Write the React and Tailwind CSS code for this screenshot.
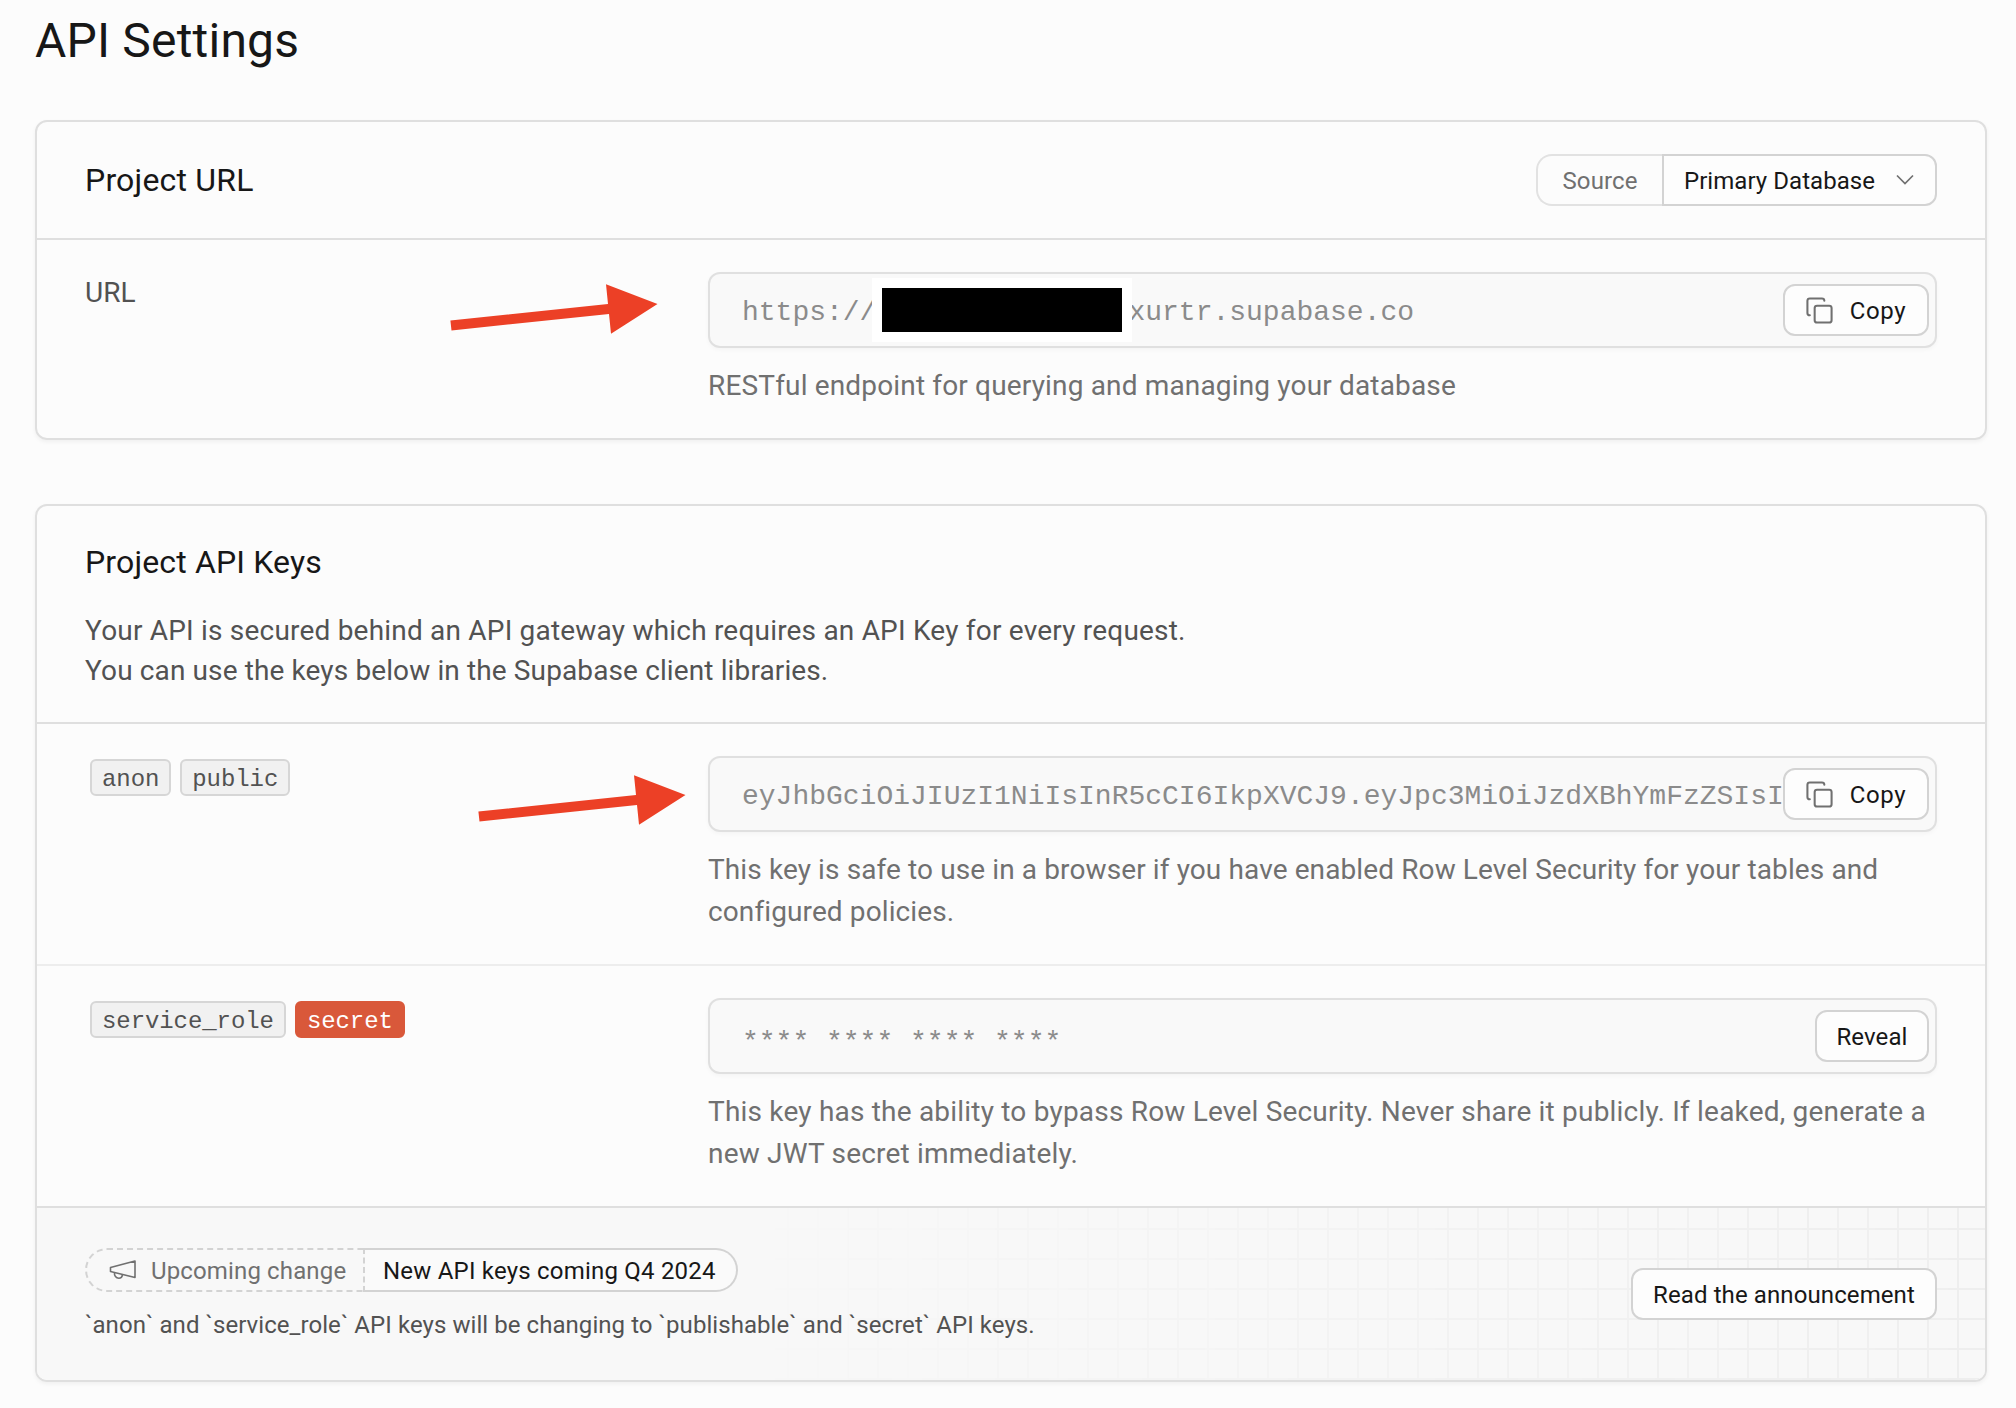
import React from "react";
import { Copy } from "lucide-react";

function Button({ children, className = "" }) {
  return (
    <button
      type="button"
      className={`flex h-[52px] shrink-0 items-center justify-center rounded-xl border-2 border-[#d3d3d3] bg-[#fdfdfd] pt-[2px] text-2xl tracking-[0.1px] text-[#171717] ${className}`}
    >
      {children}
    </button>
  );
}

function CopyButton() {
  return (
    <Button className="w-[146px] gap-[16px]">
      <Copy size={29} strokeWidth={1.7} className="-mt-[2px] -ml-px text-[#707070]" />
      <span className="tracking-[0.6px]">Copy</span>
    </Button>
  );
}

function Field({ value, action }) {
  return (
    <div className="flex h-[76px] items-center rounded-xl border-2 border-[#e0e0e0] bg-[#f9f9f9] pr-[6px] pl-8 shadow-[0_2px_4px_rgba(0,0,0,0.03)]">
      <div className="min-w-0 flex-1 pt-[5px] font-['Liberation_Mono',monospace] text-[28px] leading-10 whitespace-pre text-[#8b8b8b]">
        {value}
      </div>
      {action}
    </div>
  );
}

function Row({ label, children, help }) {
  return (
    <div className="flex justify-between pt-8 pr-12 pb-[31px] pl-12">
      <div>{label}</div>
      <div className="w-[1229px]">
        {children}
        <p className="mt-[17px] text-[28px] leading-[42px] text-[#707070]">{help}</p>
      </div>
    </div>
  );
}

function Tag({ children, danger }) {
  return (
    <span
      className={`flex h-[37px] items-center rounded-md border-2 px-[10px] pt-[4px] font-['Liberation_Mono',monospace] text-2xl leading-none tracking-[-0.08px] ${
        danger ? "border-[#d9583a] bg-[#d9583a] text-white" : "border-[#d6d6d6] bg-[#f1f1f1] text-[#525252]"
      }`}
    >
      {children}
    </span>
  );
}

function Tags({ children }) {
  return <div className="mt-[3px] ml-[5px] flex gap-[9px]">{children}</div>;
}

function Arrow({ className }) {
  return (
    <svg className={`pointer-events-none absolute ${className}`} width="208" height="50" viewBox="0 0 208 50">
      <path d="M.4 36.5 158 20 156 .3l51.5 19.7L161 49.7 159 30 1.5 46.5z" fill="#ec4026" />
    </svg>
  );
}

const card = "rounded-xl border-2 border-[#dfdfdf] shadow-[0_2px_4px_rgba(0,0,0,0.05)]";

export default function App() {
  return (
    <main className="relative h-[1408px] w-[2016px] overflow-hidden bg-[#fcfcfc] pt-[13px] pr-[29px] pl-[35px] font-[Roboto,sans-serif]">
      <h1 className="h-14 text-5xl leading-[56px] tracking-[0.2px] text-[#171717]">API Settings</h1>

      <section className={`mt-[51px] ${card}`}>
        <header className="flex h-[118px] items-center justify-between border-b-2 border-[#dfdfdf] pr-12 pl-12">
          <h2 className="text-[32px] tracking-[0.2px] text-[#171717]">Project URL</h2>
          <div className="flex h-[52px] text-2xl">
            <span className="flex w-[126px] items-center justify-center rounded-l-2xl border-2 border-r-0 border-[#e2e2e2] pt-[2px] tracking-[0.1px] text-[#707070]">
              Source
            </span>
            <button
              type="button"
              className="flex w-[275px] items-center justify-between rounded-r-xl border-2 border-[#d3d3d3] bg-[#fdfdfd] pt-[2px] pr-[21px] pl-5 tracking-[0.05px] text-[#171717]"
            >
              Primary Database
              <svg className="-mt-[2px]" width="18" height="12" viewBox="0 0 18 12" fill="none" stroke="#707070" strokeWidth="1.7">
                <path d="m1 1.5 8 8 8-8" />
              </svg>
            </button>
          </div>
        </header>
        <Row
          label={<span className="block pt-px text-[28px] leading-10 text-[#525252]">URL</span>}
          help={<span className="tracking-[0.16px]">RESTful endpoint for querying and managing your database</span>}
        >
          <Field
            value={
              <span className="flex">
                https://
                <span className="relative w-[252px]">
                  <span className="absolute -top-[15px] -left-[4px] h-16 w-[260px] border-x-10 border-y-10 border-white bg-black" />
                </span>
                xurtr.supabase.co
              </span>
            }
            action={<CopyButton />}
          />
        </Row>
      </section>

      <section className={`mt-16 ${card}`}>
        <header className="border-b-2 border-[#dfdfdf] pt-9 pb-[31px] pl-12">
          <h2 className="text-[32px] leading-10 tracking-[0.15px] text-[#171717]">Project API Keys</h2>
          <p className="mt-[29px] text-[28px] leading-10 text-[#525252]">
            <span className="tracking-[0.2px]">
              Your API is secured behind an API gateway which requires an API Key for every request.
            </span>
            <br />
            <span className="tracking-[0.12px]">You can use the keys below in the Supabase client libraries.</span>
          </p>
        </header>
        <Row
          label={
            <Tags>
              <Tag>anon</Tag>
              <Tag>public</Tag>
            </Tags>
          }
          help={
            <span className="tracking-[0.11px]">
              This key is safe to use in a browser if you have enabled Row Level Security for your tables and configured
              policies.
            </span>
          }
        >
          <Field value="eyJhbGciOiJIUzI1NiIsInR5cCI6IkpXVCJ9.eyJpc3MiOiJzdXBhYmFzZSIsI" action={<CopyButton />} />
        </Row>
        <div className="border-t-2 border-[#ededed]">
          <Row
            label={
              <Tags>
                <Tag>service_role</Tag>
                <Tag danger>secret</Tag>
              </Tags>
            }
            help={
              <span className="tracking-[0.2px]">
                This key has the ability to bypass Row Level Security. Never share it publicly. If leaked, generate a new
                JWT secret immediately.
              </span>
            }
          >
            <Field
              value={<span className="block translate-y-1">**** **** **** ****</span>}
              action={<Button className="w-[114px]">Reveal</Button>}
            />
          </Row>
        </div>
        <footer className="relative flex h-[174px] items-center justify-between rounded-b-[10px] border-t-2 border-[#dfdfdf] bg-[#f8f8f8] pr-12 pl-12">
          <div className="absolute inset-0 rounded-b-[10px] bg-[linear-gradient(to_right,#eeeeee_2px,transparent_2px),linear-gradient(to_bottom,#eeeeee_2px,transparent_2px)] bg-[size:30px_30px] bg-[position:0_20px] mask-[linear-gradient(to_right,transparent_36%,black_100%)]" />
          <div className="relative mt-[2px]">
            <div className="flex h-11 w-[653px] text-2xl">
              <span className="flex w-[280px] items-center rounded-l-full border-2 border-dashed border-[#d3d3d3] pt-[3px] pl-[22px] tracking-[0.14px] text-[#707070]">
                <svg className="mr-[14px] -mt-[2px]" width="28" height="22" viewBox="0 0 28 22" fill="none" stroke="#707070" strokeWidth="1.6">
                  <path d="M1.5 8.5 26 2v16.5L1.5 12.5z" strokeLinejoin="round" />
                  <path d="M5.5 13.6c-.4 3.2 1.5 5.6 4.3 5.6 2 0 3.4-1.5 3.6-3.6" />
                </svg>
                Upcoming change
              </span>
              <span className="flex flex-1 items-center rounded-r-full border-2 border-l-0 border-[#d3d3d3] bg-[#fafafa] pt-[3px] pl-[18px] tracking-[0.21px] text-[#171717]">
                New API keys coming Q4 2024
              </span>
            </div>
            <p className="mt-[15px] text-2xl leading-9 tracking-[0.06px] text-[#525252]">
              `anon` and `service_role` API keys will be changing to `publishable` and `secret` API keys.
            </p>
          </div>
          <Button className="relative w-[306px]">Read the announcement</Button>
        </footer>
      </section>

      <Arrow className="top-[284px] left-[450px]" />
      <Arrow className="top-[775px] left-[478px]" />
    </main>
  );
}
